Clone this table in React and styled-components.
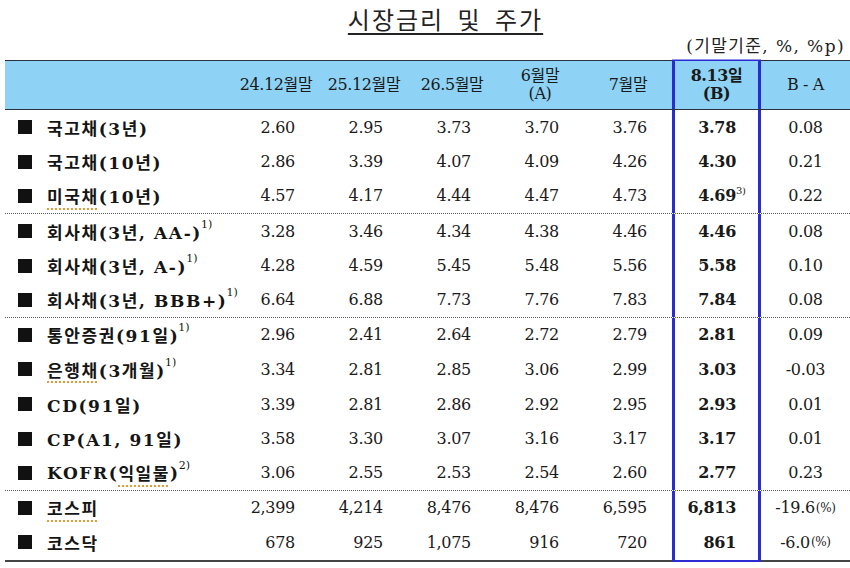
import React from 'react';
import styled, { createGlobalStyle } from 'styled-components';

const GlobalStyle = createGlobalStyle`
  html, body {
    margin: 0;
    padding: 0;
    background: #fff;
  }
  body {
    font-family: "DejaVu Serif", "Noto Sans CJK KR", serif;
    color: #1a1a1a;
  }
`;

const COLS = '227px 88px 88px 88px 88px 88px 89px 89px';
const BOX = '#2b2bd2';

const Page = styled.div`
  width: 850px;
  padding: 3px 0 0 5px;
  box-sizing: border-box;
`;

const Title = styled.h1`
  margin: 0;
  padding-left: 36px;
  height: 32px;
  line-height: 32px;
  text-align: center;
  font-family: "Noto Sans CJK KR", sans-serif;
  font-size: 24px;
  font-weight: 400;
  letter-spacing: 2px;
  word-spacing: 6px;
  color: #222;

  span {
    text-decoration: underline;
    text-decoration-thickness: 1.5px;
    text-underline-offset: 4px;
  }
`;

const Unit = styled.div`
  height: 25px;
  line-height: 22px;
  text-align: right;
  padding-right: 5px;
  font-family: "DejaVu Serif", "Noto Sans CJK KR", serif;
  font-size: 17px;
  letter-spacing: 1.4px;
  color: #222;
`;

const Table = styled.div`
  width: 845px;
  border-bottom: 2px solid #444;
`;

const HeadRow = styled.div`
  display: grid;
  grid-template-columns: ${COLS};
  height: 50px;
  box-sizing: border-box;
  background: #8ed3f5;
  border-top: 1.5px solid #2a3040;
  border-bottom: 1.5px solid #2a3040;
`;

const HeadCell = styled.div`
  display: flex;
  flex-direction: column;
  align-items: center;
  justify-content: center;
  font-size: 16px;
  line-height: 18px;
  letter-spacing: -0.4px;
  font-weight: ${(p) => (p.$bold ? 700 : 400)};
  white-space: nowrap;
  box-shadow: ${(p) =>
    p.$box ? `inset 3px 0 0 ${BOX}, inset -3px 0 0 ${BOX}, 0 -1.5px 0 ${BOX}` : 'none'};
`;

const Row = styled.div`
  display: grid;
  grid-template-columns: ${COLS};
  height: 34.6px;
  box-sizing: border-box;
  border-bottom: ${(p) => (p.$sep ? '1px dotted #555' : 'none')};
`;

const Label = styled.div`
  display: flex;
  align-items: center;
  padding-left: 13px;
  white-space: nowrap;
  font-family: "DejaVu Serif", "Noto Sans CJK KR", serif;
  font-size: 17px;
  font-weight: 700;
  letter-spacing: 1.6px;
  color: #151515;
`;

const Bullet = styled.i`
  display: block;
  width: 14px;
  height: 14px;
  margin-right: 15px;
  background: #111;
  flex: none;
`;

const Squiggle = styled.span`
  text-decoration: underline dotted #e39a3a;
  text-decoration-thickness: 2px;
  text-underline-offset: 5px;
`;

const Sup = styled.sup`
  font-size: 11px;
  font-weight: 400;
  letter-spacing: 0;
  vertical-align: 0;
  position: relative;
  top: -7px;
  margin-left: -1px;
`;

const Value = styled.div`
  position: relative;
  display: flex;
  align-items: center;
  justify-content: ${(p) => (p.$center ? 'center' : 'flex-end')};
  padding-right: ${(p) => (p.$center ? '0' : '25px')};
  font-size: 16px;
  font-weight: ${(p) => (p.$bold ? 700 : 400)};
  letter-spacing: -0.3px;
  white-space: nowrap;
  box-shadow: ${(p) =>
    p.$box
      ? `inset 3px 0 0 ${BOX}, inset -3px 0 0 ${BOX}${p.$last ? `, 0 3px 0 ${BOX}` : ''}`
      : 'none'};
`;

const Note = styled.span`
  position: absolute;
  left: calc(100% - 25px);
  top: 6px;
  font-size: 10px;
  font-weight: 400;
`;

const Pct = styled.span`
  font-size: 12px;
  margin-left: 1px;
`;

const headers = [
  ['24.12월말'],
  ['25.12월말'],
  ['26.5월말'],
  ['6월말', '(A)'],
  ['7월말'],
  ['8.13일', '(B)'],
  ['B - A'],
];

const rows = [
  { name: ['국고채(3년)'], v: ['2.60', '2.95', '3.73', '3.70', '3.76', '3.78', '0.08'] },
  { name: ['국고채(10년)'], v: ['2.86', '3.39', '4.07', '4.09', '4.26', '4.30', '0.21'] },
  { name: [{ sq: '미국채' }, '(10년)'], v: ['4.57', '4.17', '4.44', '4.47', '4.73', '4.69', '0.22'], note: '3)', sep: true },
  { name: ['회사채(3년, AA-)'], sup: '1)', v: ['3.28', '3.46', '4.34', '4.38', '4.46', '4.46', '0.08'] },
  { name: ['회사채(3년, A-)'], sup: '1)', v: ['4.28', '4.59', '5.45', '5.48', '5.56', '5.58', '0.10'] },
  { name: ['회사채(3년, BBB+)'], sup: '1)', v: ['6.64', '6.88', '7.73', '7.76', '7.83', '7.84', '0.08'], sep: true },
  { name: ['통안증권(91일)'], sup: '1)', v: ['2.96', '2.41', '2.64', '2.72', '2.79', '2.81', '0.09'] },
  { name: [{ sq: '은행채' }, '(3개월)'], sup: '1)', v: ['3.34', '2.81', '2.85', '3.06', '2.99', '3.03', '-0.03'] },
  { name: ['CD(91일)'], v: ['3.39', '2.81', '2.86', '2.92', '2.95', '2.93', '0.01'] },
  { name: ['CP(A1, 91일)'], v: ['3.58', '3.30', '3.07', '3.16', '3.17', '3.17', '0.01'] },
  { name: ['KOFR(', { sq: '익일물' }, ')'], sup: '2)', v: ['3.06', '2.55', '2.53', '2.54', '2.60', '2.77', '0.23'], sep: true },
  { name: [{ sq: '코스피' }], v: ['2,399', '4,214', '8,476', '8,476', '6,595', '6,813', '-19.6'], pct: true },
  { name: ['코스닥'], v: ['678', '925', '1,075', '916', '720', '861', '-6.0'], pct: true },
];

function LabelText({ parts }) {
  return parts.map((p, i) =>
    typeof p === 'string' ? <span key={i}>{p}</span> : <Squiggle key={i}>{p.sq}</Squiggle>
  );
}

export default function App() {
  return (
    <Page>
      <GlobalStyle />
      <Title>
        <span>시장금리 및 주가</span>
      </Title>
      <Unit>(기말기준, %, %p)</Unit>
      <Table>
        <HeadRow>
          <HeadCell />
          {headers.map((lines, i) => (
            <HeadCell key={i} $bold={i === 5} $box={i === 5}>
              {lines.map((l) => (
                <span key={l}>{l}</span>
              ))}
            </HeadCell>
          ))}
        </HeadRow>
        {rows.map((r, ri) => (
          <Row key={ri} $sep={r.sep}>
            <Label>
              <Bullet />
              <LabelText parts={r.name} />
              {r.sup && <Sup>{r.sup}</Sup>}
            </Label>
            {r.v.map((val, ci) => (
              <Value
                key={ci}
                $bold={ci === 5}
                $box={ci === 5}
                $last={ri === rows.length - 1}
                $center={ci === 6}
              >
                {val}
                {ci === 5 && r.note && <Note>{r.note}</Note>}
                {ci === 6 && r.pct && <Pct>(%)</Pct>}
              </Value>
            ))}
          </Row>
        ))}
      </Table>
    </Page>
  );
}
